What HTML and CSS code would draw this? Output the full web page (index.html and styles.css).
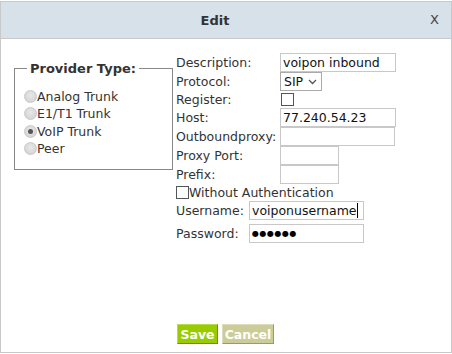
FILE: index.html
```html
<!DOCTYPE html>
<html>
<head>
<meta charset="utf-8">
<link rel="stylesheet" href="styles.css">
</head>
<body>
<div class="dialog">
  <div class="header">
    <span class="title">Edit</span>
    <span class="close">X</span>
  </div>
  <div class="content">
    <fieldset class="ptype">
      <legend>Provider Type:</legend>
      <label class="radio"><input type="radio" name="pt"><span>Analog Trunk</span></label>
      <label class="radio"><input type="radio" name="pt"><span>E1/T1 Trunk</span></label>
      <label class="radio"><input type="radio" name="pt" checked><span>VoIP Trunk</span></label>
      <label class="radio"><input type="radio" name="pt"><span>Peer</span></label>
    </fieldset>
    <div class="fields">
      <div class="grid">
        <span class="lbl">Description:</span><span class="cell"><input class="txt wide" value="voipon inbound"></span>
        <span class="lbl">Protocol:</span><span class="cell"><span class="select">SIP<svg width="9" height="6" viewBox="0 0 9 6"><path d="M1 1 L4.5 4.5 L8 1" fill="none" stroke="#555" stroke-width="1.3"/></svg></span></span>
        <span class="lbl">Register:</span><span class="cell"><span class="check"></span></span>
        <span class="lbl">Host:</span><span class="cell"><input class="txt wide" value="77.240.54.23"></span>
        <span class="lbl">Outboundproxy:</span><span class="cell"><input class="txt wide2" value=""></span>
        <span class="lbl">Proxy Port:</span><span class="cell"><input class="txt short" value=""></span>
        <span class="lbl">Prefix:</span><span class="cell"><input class="txt short" value=""></span>
      </div>
      <div class="noauth"><span class="check"></span>Without Authentication</div>
      <div class="grid2">
        <span class="lbl">Username:</span><span class="cell"><span class="txt user">voiponusername<span class="caret"></span></span></span>
        <span class="lbl">Password:</span><span class="cell"><span class="txt user pw">●●●●●●</span></span>
      </div>
    </div>
  </div>
  <div class="buttons">
    <button class="btn save">Save</button>
    <button class="btn cancel">Cancel</button>
  </div>
</div>
</body>
</html>
```
FILE: styles.css
```css
html, body {
  margin: 0;
  padding: 0;
  background: #fff;
}
body {
  font-family: "DejaVu Sans", Verdana, sans-serif;
  font-size: 12.5px;
  color: #333;
}
.dialog {
  margin-top: 1px;
  width: 450px;
  height: 350px;
  border: 1px solid #c9c9c9;
  display: flex;
  flex-direction: column;
}
.header {
  height: 36px;
  background: #d6e1ea;
  border-bottom: 1px solid #c9c9c9;
  position: relative;
  display: flex;
  align-items: center;
  justify-content: center;
  padding-right: 22px;
}
.title {
  font-weight: bold;
  font-size: 13px;
  color: #333;
}
.close {
  position: absolute;
  right: 12px;
  top: 10px;
  font-size: 13px;
  color: #444;
}
.content {
  display: flex;
  align-items: flex-start;
  padding: 14px 0 0 13px;
  flex: 1;
}
.ptype {
  margin: 8px 0 0 0;
  padding: 12px 0 0 9px;
  width: 159px;
  border: 1px solid #888;
  display: flex;
  flex-direction: column;
  box-sizing: border-box;
  height: 109px;
}
.ptype legend {
  font-weight: bold;
  font-size: 13px;
  padding: 0 3px;
  margin-left: 3px;
  color: #333;
}
.radio {
  display: flex;
  align-items: center;
  height: 17.3px;
  font-size: 12.5px;
  color: #333;
}
.radio input {
  appearance: none;
  -webkit-appearance: none;
  width: 13px;
  height: 13px;
  margin: 0;
  border-radius: 50%;
  border: 1px solid #c8c8c8;
  background: radial-gradient(circle at 50% 40%, #e8e8e8, #cfcfcf);
  box-sizing: border-box;
  position: relative;
}
.radio input:checked::after {
  content: "";
  position: absolute;
  left: 3px;
  top: 3px;
  width: 5px;
  height: 5px;
  border-radius: 50%;
  background: #555;
}
.fields {
  margin-left: 3px;
  display: flex;
  flex-direction: column;
}
.grid {
  display: grid;
  grid-template-columns: 104px auto;
  grid-template-rows: 19px 19px 17px 19px 19px 19px 19px;
  align-items: center;
}
.lbl {
  font-size: 12.5px;
  color: #333;
  white-space: nowrap;
}
.cell {
  display: flex;
  align-items: center;
}
.txt {
  font-family: "DejaVu Sans", Verdana, sans-serif;
  font-size: 12.5px;
  color: #111;
  height: 19px;
  box-sizing: border-box;
  border: 1px solid #c8c8c8;
  padding: 0 2px;
  margin: 0;
  outline: none;
  background: #fff;
  display: flex;
  align-items: center;
}
.wide { width: 116px; }
.wide2 { width: 115px; }
.short { width: 59px; }
.select {
  display: flex;
  align-items: center;
  gap: 5px;
  height: 19px;
  box-sizing: border-box;
  border: 1px solid #aaa;
  padding: 0 4px 0 3px;
  font-size: 12.5px;
  color: #111;
}
.check {
  display: inline-block;
  width: 13px;
  height: 13px;
  box-sizing: border-box;
  border: 1px solid #555;
  background: #fff;
  margin-left: 1px;
}
.noauth {
  display: flex;
  align-items: center;
  height: 16px;
  font-size: 12.5px;
  margin-top: 0;
}
.noauth .check { margin-left: 0; }
.grid2 {
  display: grid;
  grid-template-columns: 73px auto;
  grid-auto-rows: 19px;
  row-gap: 4px;
  margin-top: 1px;
  align-items: center;
}
.user { width: 115px; }
.caret {
  display: inline-block;
  width: 1px;
  height: 15px;
  background: #000;
}
.pw { font-size: 8px; letter-spacing: 0.5px; color: #000; }
.buttons {
  display: flex;
  gap: 4px;
  padding: 0 0 8px 176px;
}
.btn {
  font-family: "DejaVu Sans", Verdana, sans-serif;
  font-weight: bold;
  font-size: 12.5px;
  color: #fff;
  height: 20px;
  padding: 0;
  margin: 0;
  border: 1px solid;
  line-height: 17px;
}
.save {
  width: 41px;
  background: #99cc00;
  border-color: #b5dd44 #6f9400 #6f9400 #b5dd44;
}
.cancel {
  width: 52px;
  background: #cccc99;
  border-color: #ddddbb #999977 #999977 #ddddbb;
}
```
